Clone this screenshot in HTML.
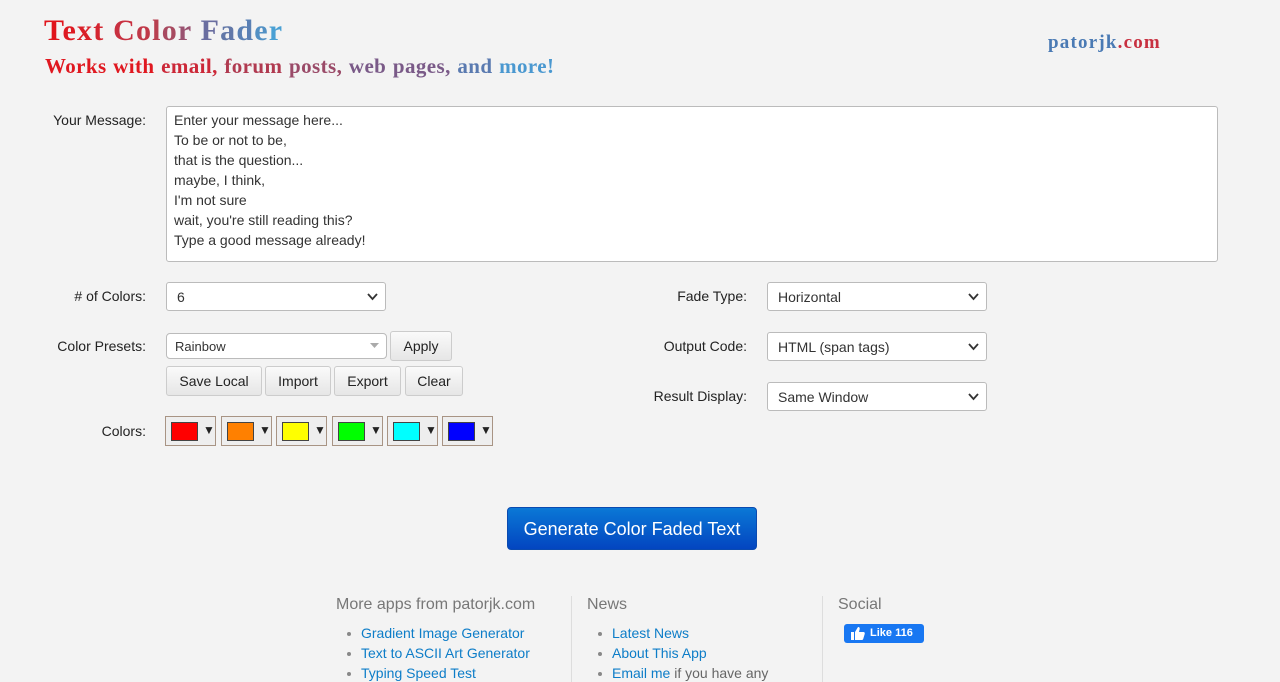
<!DOCTYPE html>
<html><head><meta charset="utf-8">
<style>
*{box-sizing:border-box}
html,body{margin:0;width:1280px;height:682px;overflow:hidden}
body{background:#f3f3f3;font-family:"Liberation Sans",sans-serif;color:#333;font-size:14px;position:relative}
.abs{position:absolute}
.title{left:44px;top:14px;font-family:"Liberation Serif",serif;font-weight:bold;font-size:30px;letter-spacing:1.2px}
.sub{left:45px;top:54px;font-family:"Liberation Serif",serif;font-weight:bold;font-size:21px;letter-spacing:0.4px;word-spacing:1px}
.pk{left:1048px;top:32px;font-family:"Liberation Serif",serif;font-weight:bold;font-size:19px;letter-spacing:1.2px}
.lbl{font-size:14px;color:#222;text-align:right}
.ta{left:166px;top:106px;width:1052px;height:156px;border:1px solid #bbb;border-radius:3px;background:#fff;padding:3px 7px;font-size:14px;line-height:20px;color:#333}
.sel{background:#fff;border:1px solid #bbb;border-radius:3px;height:29px;padding:6px 10px;font-size:14px;color:#333}
.sel svg{position:absolute;right:7px;top:10px}
.btn{border:1px solid #ccc;border-radius:3px;background:linear-gradient(#fafafa,#e6e6e6);height:30px;font-size:14px;color:#222;text-align:center;line-height:28px}
.sw{top:416px;width:51px;height:30px;border:1px solid #a89484;background:#eee}
.sw i{position:absolute;left:5px;top:5px;width:27px;height:19px;border:1px solid #444}
.sw b{position:absolute;left:37px;top:6px;font-size:12px;color:#222;font-weight:normal}
.gen{left:507px;top:507px;width:250px;height:43px;border-radius:4px;background:linear-gradient(#0a78d6,#0345c0);color:#fff;font-size:18px;text-align:center;line-height:43px;border:1px solid #0a4ab0}
.fh{font-size:16px;color:#777}
ul{margin:0;padding:0;list-style:none}
li{font-size:14px;line-height:20px;color:#0d7dc8;position:relative;padding-left:25px}
li:before{content:"";position:absolute;left:11px;top:9px;width:4px;height:4px;border-radius:2px;background:#888}
.vl{width:1px;background:#ddd;top:596px;height:90px}
</style></head><body>
<div class="abs title"><span style="color:#e0141c">T</span><span style="color:#de1a22">e</span><span style="color:#da1f28">x</span><span style="color:#d42530">t</span> <span style="color:#c83040">C</span><span style="color:#c03848">o</span><span style="color:#b84050">l</span><span style="color:#a84a60">o</span><span style="color:#9a5270">r</span> <span style="color:#6a6ea0">F</span><span style="color:#6278a8">a</span><span style="color:#5a80b4">d</span><span style="color:#5290c4">e</span><span style="color:#4aa0d4">r</span></div>
<div class="abs sub"><span style="color:#e01820">Works with</span> <span style="color:#cc2838">email,</span> <span style="color:#b03a50">forum</span> <span style="color:#9a4a68">posts,</span> <span style="color:#7a5a88">web pages,</span> <span style="color:#5a7ab0">and</span> <span style="color:#4a98d0">more!</span></div>
<div class="abs pk"><span style="color:#4a7ab4">patorjk</span><span style="color:#c83040">.com</span></div>

<div class="abs lbl" style="left:40px;top:112px;width:106px">Your Message:</div>
<div class="abs ta">Enter your message here...<br>To be or not to be,<br>that is the question...<br>maybe, I think,<br>I'm not sure<br>wait, you're still reading this?<br>Type a good message already!</div>

<div class="abs lbl" style="left:40px;top:288px;width:106px"># of Colors:</div>
<div class="abs sel" style="left:166px;top:282px;width:220px">6<svg width="11" height="8"><path d="M1 1l4.5 5 4.5-5" fill="none" stroke="#333" stroke-width="1.8"/></svg></div>
<div class="abs lbl" style="left:30px;top:338px;width:116px">Color Presets:</div>
<div class="abs sel" style="left:166px;top:333px;width:221px;height:26px;padding:5px 8px;font-size:13px;border-radius:4px">Rainbow<svg width="9" height="6" style="top:9px"><path d="M0 0h9L4.5 5z" fill="#aaa"/></svg></div>
<div class="abs btn" style="left:390px;top:331px;width:62px">Apply</div>
<div class="abs btn" style="left:166px;top:366px;width:96px">Save Local</div>
<div class="abs btn" style="left:265px;top:366px;width:66px">Import</div>
<div class="abs btn" style="left:334px;top:366px;width:67px">Export</div>
<div class="abs btn" style="left:405px;top:366px;width:58px">Clear</div>
<div class="abs lbl" style="left:40px;top:423px;width:106px">Colors:</div>
<div class="abs sw" style="left:165px"><i style="background:#f00"></i><b>▼</b></div>
<div class="abs sw" style="left:221px"><i style="background:#ff8000"></i><b>▼</b></div>
<div class="abs sw" style="left:276px"><i style="background:#ff0"></i><b>▼</b></div>
<div class="abs sw" style="left:332px"><i style="background:#0f0"></i><b>▼</b></div>
<div class="abs sw" style="left:387px"><i style="background:#0ff"></i><b>▼</b></div>
<div class="abs sw" style="left:442px"><i style="background:#00f"></i><b>▼</b></div>

<div class="abs lbl" style="left:600px;top:288px;width:147px">Fade Type:</div>
<div class="abs sel" style="left:767px;top:282px;width:220px">Horizontal<svg width="11" height="8"><path d="M1 1l4.5 5 4.5-5" fill="none" stroke="#333" stroke-width="1.8"/></svg></div>
<div class="abs lbl" style="left:600px;top:338px;width:147px">Output Code:</div>
<div class="abs sel" style="left:767px;top:332px;width:220px">HTML (span tags)<svg width="11" height="8"><path d="M1 1l4.5 5 4.5-5" fill="none" stroke="#333" stroke-width="1.8"/></svg></div>
<div class="abs lbl" style="left:600px;top:388px;width:147px">Result Display:</div>
<div class="abs sel" style="left:767px;top:382px;width:220px">Same Window<svg width="11" height="8"><path d="M1 1l4.5 5 4.5-5" fill="none" stroke="#333" stroke-width="1.8"/></svg></div>

<div class="abs gen">Generate Color Faded Text</div>

<div class="abs fh" style="left:336px;top:596px">More apps from patorjk.com</div>
<ul class="abs" style="left:336px;top:623px"><li>Gradient Image Generator</li><li>Text to ASCII Art Generator</li><li>Typing Speed Test</li></ul>
<div class="abs vl" style="left:571px"></div>
<div class="abs fh" style="left:587px;top:596px">News</div>
<ul class="abs" style="left:587px;top:623px"><li>Latest News</li><li>About This App</li><li>Email me <span style="color:#666">if you have any</span></li></ul>
<div class="abs vl" style="left:822px"></div>
<div class="abs fh" style="left:838px;top:596px">Social</div>
<div class="abs" style="left:844px;top:624px;width:80px;height:19px;background:#1877f2;border-radius:3px;color:#fff;font-size:11px;font-weight:bold;line-height:19px;padding-left:26px"><svg class="abs" style="left:7px;top:3px" width="14" height="13" viewBox="0 0 14 13"><path d="M0 5h3v8H0z M4 5l3-5c1.5 0 2 1 1.6 2.5L8 5h4.5c1 0 1.5 1 1.2 2l-1.5 5c-.3.7-.8 1-1.5 1H4z" fill="#fff"/></svg>Like 116</div>
</body></html>
